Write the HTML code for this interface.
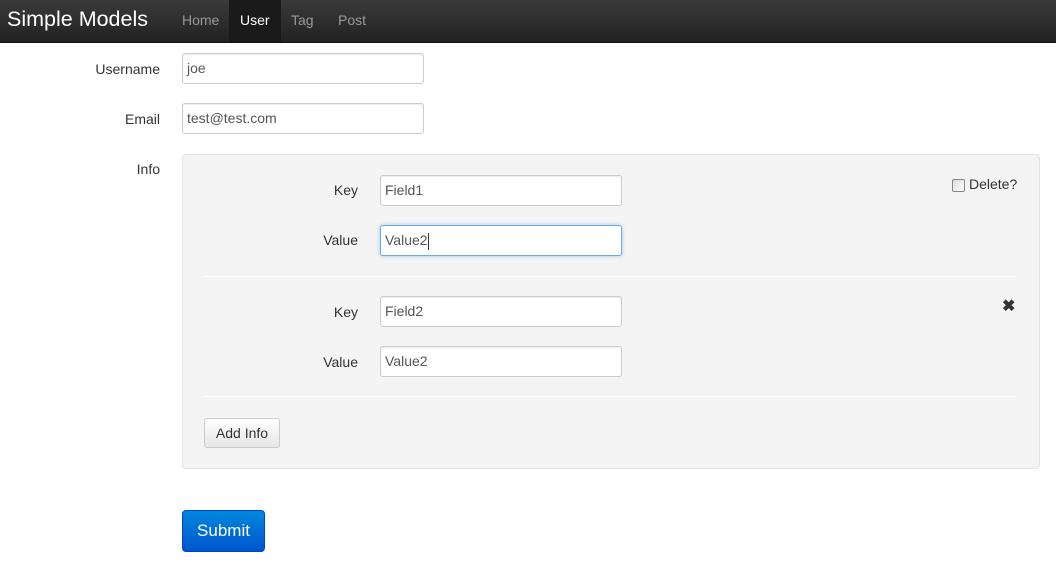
<!DOCTYPE html>
<html><head><style>
*{box-sizing:border-box}
body{margin:0;width:1056px;height:564px;background:#fff;font-family:"Liberation Sans",sans-serif;font-size:14px;color:#333;position:relative;overflow:hidden}
.nav{position:absolute;left:0;top:0;width:1056px;height:43px;background:linear-gradient(#3a3a3a,#222);border-bottom:1px solid #111}
.brand{position:absolute;left:7px;top:7px;font-size:21.5px;color:#fff}
.nl{position:absolute;top:0;height:42px;line-height:41px;color:#999;font-size:14px;padding:0 11px}
.act{background:#1a1a1a;color:#fff}
.lbl{position:absolute;text-align:right;font-size:14px;color:#333}
.in{position:absolute;height:31px;border:1px solid #ccc;border-radius:3px;background:#fff;padding:0 4px;line-height:29px;font-size:14px;color:#555;box-shadow:inset 0 1px 1px rgba(0,0,0,.075)}
.focus{border-color:#66afe9;box-shadow:0 0 4px rgba(102,175,233,.6)}
.well{position:absolute;left:182px;top:154px;width:858px;height:315px;background:#f4f4f4;border:1px solid #e3e3e3;border-radius:4px}
.hr{position:absolute;left:204px;width:813px;height:1px;background:#e6e6e6;border-bottom:1px solid #fff}
</style></head><body>
<div class="nav">
<div class="brand">Simple Models</div>
<div class="nl" style="left:171px">Home</div>
<div class="nl act" style="left:229px">User</div>
<div class="nl" style="left:280px">Tag</div>
<div class="nl" style="left:327px">Post</div>
</div>
<div class="lbl" style="left:60px;width:100px;top:61px">Username</div>
<div class="in" style="left:182px;top:53px;width:242px">joe</div>
<div class="lbl" style="left:60px;width:100px;top:111px">Email</div>
<div class="in" style="left:182px;top:103px;width:242px">test@test.com</div>
<div class="lbl" style="left:60px;width:100px;top:161px">Info</div>
<div class="well"></div>
<div class="lbl" style="left:258px;width:100px;top:182px">Key</div>
<div class="in" style="left:380px;top:175px;width:242px">Field1</div>
<div class="lbl" style="left:258px;width:100px;top:232px">Value</div>
<div class="in focus" style="left:380px;top:225px;width:242px">Value2<span style="display:inline-block;width:1px;height:17px;background:#333;vertical-align:middle"></span></div>
<div style="position:absolute;left:952px;top:179px;width:13px;height:13px;border:1px solid #888;border-radius:2px;background:linear-gradient(135deg,#ddd,#fff)"></div>
<div style="position:absolute;left:969px;top:176px;font-size:14px">Delete?</div>
<div class="hr" style="top:276px"></div>
<div class="lbl" style="left:258px;width:100px;top:304px">Key</div>
<div class="in" style="left:380px;top:296px;width:242px">Field2</div>
<div class="lbl" style="left:258px;width:100px;top:354px">Value</div>
<div class="in" style="left:380px;top:346px;width:242px">Value2</div>
<div style="position:absolute;left:1002px;top:296px;font-size:16px;font-weight:bold;color:#333">✖</div>
<div class="hr" style="top:396px"></div>
<div style="position:absolute;left:204px;top:418px;width:76px;height:30px;border:1px solid #ccc;border-radius:3px;background:linear-gradient(#fff,#e6e6e6);text-align:center;line-height:28px;font-size:14px;color:#333">Add Info</div>
<div style="position:absolute;left:182px;top:510px;width:83px;height:42px;border:1px solid #04c;border-radius:4px;background:linear-gradient(#0088dd,#0055cc);text-align:center;line-height:40px;font-size:17px;color:#fff">Submit</div>
</body></html>
